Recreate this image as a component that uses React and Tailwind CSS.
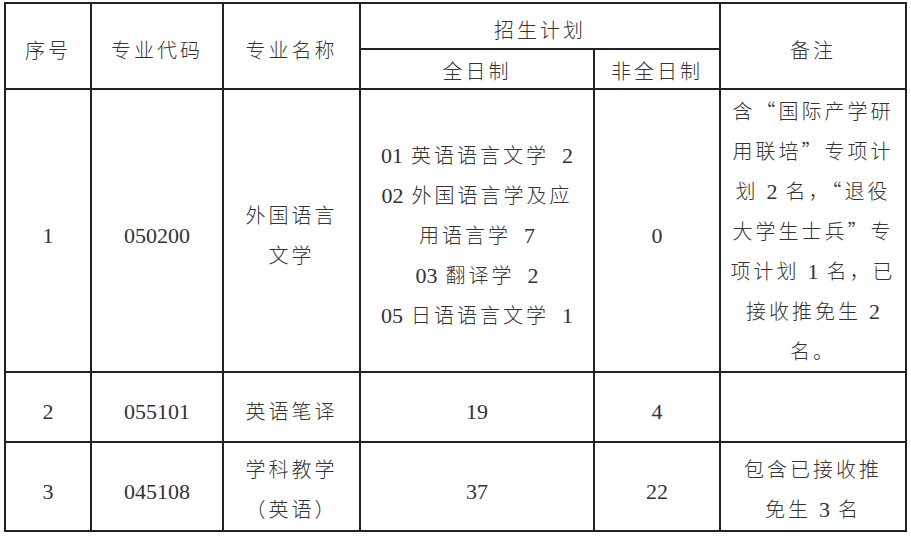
import React from "react";

const N = ({ children, cls = "" }) => (
  <span className={"font-['Liberation_Serif'] text-[22px] tracking-normal leading-none " + cls}>{children}</span>
);
const Q = ({ children }) => (
  <span className="[font-feature-settings:'fwid']">{children}</span>
);

const td = "border-2 border-[#222] text-center align-middle p-0";

export default function App() {
  return (
    <div className="w-[911px] h-[537px] bg-white pt-[2px] pl-[4px] font-['Noto_Sans_CJK_SC',sans-serif] text-[#333] text-[20px] tracking-[3px] font-light">
      <table className="table-fixed border-collapse border-2 border-[#222] w-[901px]">
        <colgroup>
          <col className="w-[86px]" />
          <col className="w-[132px]" />
          <col className="w-[137px]" />
          <col className="w-[234px]" />
          <col className="w-[126px]" />
          <col className="w-[186px]" />
        </colgroup>
        <tbody>
          <tr className="h-[46px]">
            <td rowSpan={2} className={td}><div className="pt-2">序号</div></td>
            <td rowSpan={2} className={td}><div className="pt-2">专业代码</div></td>
            <td rowSpan={2} className={td}><div className="pt-2">专业名称</div></td>
            <td colSpan={2} className={td}><div className="pt-2">招生计划</div></td>
            <td rowSpan={2} className={td}><div className="pt-2">备注</div></td>
          </tr>
          <tr className="h-[40px]">
            <td className={td}><div className="pt-1">全日制</div></td>
            <td className={td}><div className="pt-1">非全日制</div></td>
          </tr>
          <tr className="h-[283px]">
            <td className={td}><div className="pt-2"><N>1</N></div></td>
            <td className={td}><div className="pt-2"><N>050200</N></div></td>
            <td className={td}>
              <div className="pt-2 leading-[40px]">
                <div>外国语言</div>
                <div>文学</div>
              </div>
            </td>
            <td className={td}>
              <div className="pt-2 leading-[40px]">
                <div><N cls="mr-[8px]">01</N>英语语言文学<N cls="ml-[13px]">2</N></div>
                <div><N cls="mr-[8px]">02</N>外国语言学及应</div>
                <div>用语言学<N cls="ml-[13px]">7</N></div>
                <div><N cls="mr-[8px]">03</N>翻译学<N cls="ml-[13px]">2</N></div>
                <div><N cls="mr-[8px]">05</N>日语语言文学<N cls="ml-[13px]">1</N></div>
              </div>
            </td>
            <td className={td}><div className="pt-2"><N>0</N></div></td>
            <td className={td}>
              <div className="leading-[40px]">
                <div>含<Q>“</Q>国际产学研</div>
                <div>用联培<Q>”</Q>专项计</div>
                <div>划<N cls="mx-[8px]">2</N>名，<Q>“</Q>退役</div>
                <div>大学生士兵<Q>”</Q>专</div>
                <div>项计划<N cls="mx-[8px]">1</N>名，已</div>
                <div>接收推免生<N cls="ml-[8px]">2</N></div>
                <div>名。</div>
              </div>
            </td>
          </tr>
          <tr className="h-[70px]">
            <td className={td}><div className="pt-2"><N>2</N></div></td>
            <td className={td}><div className="pt-2"><N>055101</N></div></td>
            <td className={td}><div className="pt-2">英语笔译</div></td>
            <td className={td}><div className="pt-2"><N>19</N></div></td>
            <td className={td}><div className="pt-2"><N>4</N></div></td>
            <td className={td}></td>
          </tr>
          <tr className="h-[89px]">
            <td className={td}><div className="pt-2"><N>3</N></div></td>
            <td className={td}><div className="pt-2"><N>045108</N></div></td>
            <td className={td}>
              <div className="pt-1 leading-[40px]">
                <div>学科教学</div>
                <div>（英语）</div>
              </div>
            </td>
            <td className={td}><div className="pt-2"><N>37</N></div></td>
            <td className={td}><div className="pt-2"><N>22</N></div></td>
            <td className={td}>
              <div className="pt-1 leading-[40px]">
                <div>包含已接收推</div>
                <div>免生<N cls="mx-[8px]">3</N>名</div>
              </div>
            </td>
          </tr>
        </tbody>
      </table>
    </div>
  );
}
